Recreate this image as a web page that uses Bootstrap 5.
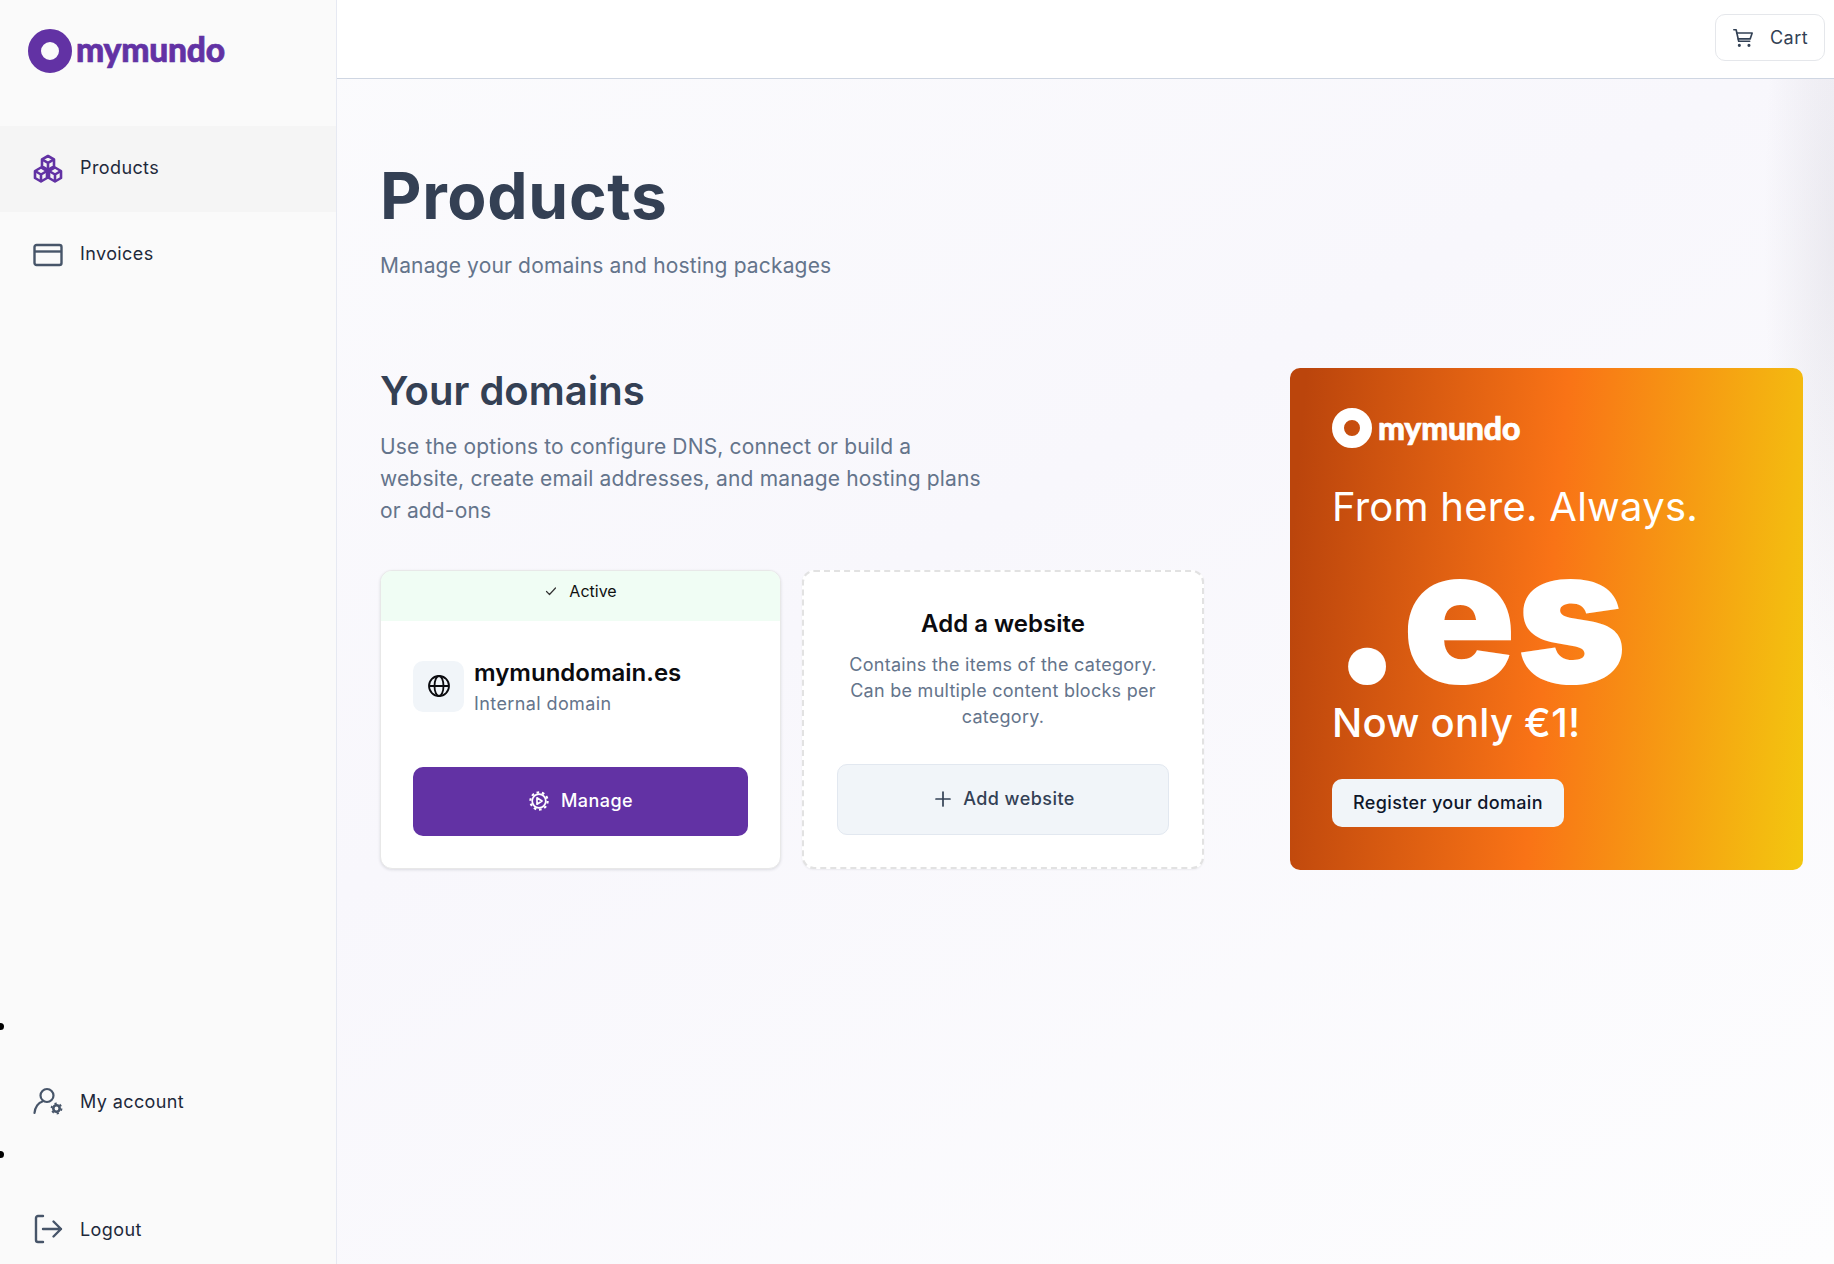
<!DOCTYPE html>
<html lang="en">
<head>
  <meta charset="UTF-8">
  <meta name="viewport" content="width=device-width, initial-scale=1.0">
  <title>mymundo - Products</title>
  <link href="https://cdn.jsdelivr.net/npm/bootstrap@5.3.0/dist/css/bootstrap.min.css" rel="stylesheet">
  <style>
    body { font-family: Inter, "Liberation Sans", sans-serif; background: #fff; height: 100vh; overflow: hidden; letter-spacing: .025em; }
    .side-panel { width: 337px; height: 100vh; background: #fafafa; border-right: 1px solid #e6e9f2; flex: none; }
    .brand-row { height: 126px; padding: 29px 0 0 28px; }
    .brand-name { font-family: Lato, sans-serif; font-weight: 900; line-height: 1; letter-spacing: -.2px; -webkit-text-stroke: .7px currentColor; }
    .brand-row .brand-name { font-size: 33.5px; color: #6232a4; margin-left: 4px; }
    .side-link { height: 86px; padding-left: 33px; gap: 17px; color: #1e293b; font-size: 18px; text-decoration: none; }
    .side-link svg { width: 30px; height: 30px; flex: none; color: #475569; }
    .side-link.is-current { background: #f5f5f5; }
    .side-link.is-current svg { color: #6232a4; }
    .top-links span { margin-bottom: 4px; }
    .foot-list { list-style: none; }
    .foot-list li { position: relative; padding: 47px 0 11px; }
    .foot-list li:last-child { padding-bottom: 0; }
    .foot-list li::before { content: ""; position: absolute; left: -3px; top: 4px; width: 7px; height: 7px; border-radius: 50%; background: #000; }
    .foot-list .side-link { height: 70px; }
    .page-area { background: radial-gradient(ellipse 70px 480px at 100% 240px, rgba(120,115,135,.11), transparent), linear-gradient(150deg, #fbfbfd 0%, #f8f7fc 42%, #fdfdfe 100%); min-width: 0; }
    .top-strip { height: 79px; background: #fff; border-bottom: 1px solid #cfd6e2; padding: 14px 9px 0 0; }
    .cart-btn { width: 110px; height: 47px; border: 1px solid #e5e7eb; border-radius: 10px; background: #fff; color: #334155; font-size: 18px; gap: 16px; letter-spacing: .025em; }
    .cart-btn svg { width: 22px; height: 22px; }
    .page-body { padding: 81px 31px 0 43px; }
    .page-title { font-size: 64px; font-weight: 700; color: #344054; line-height: 72px; margin: 0 0 18px; letter-spacing: .7px; }
    .page-sub { font-size: 21px; color: #64748b; line-height: 32px; margin: 0; letter-spacing: .16px; }
    .domain-col { width: 824px; flex: none; }
    .promo-gap { gap: 86px; margin-top: 86px; }
    .domain-title { font-size: 40px; font-weight: 600; color: #344054; line-height: 44px; margin: 1px 0 17.5px; letter-spacing: 0; }
    .domain-text { font-size: 21px; line-height: 32px; color: #64748b; max-width: 615px; margin: 0 0 43px; letter-spacing: .16px; }
    .tile-row { gap: 21px; }
    .domain-tile { width: 401px; height: 299px; background: #fff; border-radius: 12px; border: 1px solid #e8e8e8; box-shadow: 0 1px 3px rgba(15,23,42,.12); overflow: hidden; }
    .tile-status { height: 50px; background: #f0fdf4; color: #111; font-size: 16px; gap: 11px; padding-bottom: 10px; letter-spacing: 0; }
    .tile-status svg { width: 14px; height: 14px; }
    .tile-inner { padding: 35px 32px 0; }
    .globe-row { gap: 10px; }
    .globe-box { width: 51px; height: 51px; background: #f1f5f9; border-radius: 10px; flex: none; }
    .globe-box svg { width: 24px; height: 24px; }
    .tile-copy { padding-top: 2px; }
    .tile-name { font-size: 24px; font-weight: 600; color: #0b0b0f; line-height: 30px; letter-spacing: 0; }
    .tile-kind { font-size: 18px; color: #64748b; line-height: 27px; margin-top: 2px; }
    .manage-btn { height: 69px; margin-top: 50px; background: #6232a4; border: 0; border-radius: 10px; color: #fff; font-size: 18px; font-weight: 500; gap: 11px; letter-spacing: .025em; }
    .manage-btn:hover { background: #6232a4; color: #fff; }
    .manage-btn svg { width: 22px; height: 22px; }
    .manage-btn span { margin-bottom: 1px; }
    .add-tile { width: 402px; height: 299px; background: #fff; border-radius: 12px; border: 2px dashed #e2e2e2; box-shadow: 0 1px 2px rgba(15,23,42,.06); padding: 36px 32px 0; text-align: center; }
    .add-title { font-size: 24px; font-weight: 600; color: #0b0b0f; line-height: 32px; margin: 0 0 12px; letter-spacing: 0; }
    .add-text { font-size: 18px; line-height: 26.4px; color: #64748b; margin: 0 0 33px; letter-spacing: .015em; }
    .add-btn { width: 332px; height: 71px; background: #f1f5f9; border: 1px solid #e2e8f0; border-radius: 10px; color: #334155; font-size: 18px; font-weight: 500; gap: 11px; letter-spacing: .025em; padding: 0 0 0 3px; }
    .add-btn svg { width: 18px; height: 18px; }
    .add-btn span { margin-bottom: 2px; }
    .promo-box { width: 513px; height: 502px; border-radius: 10px; background: linear-gradient(95deg, #bb450c 3%, #f97316 50%, #f3c70f 100%); color: #fff; padding: 40px 42px 0; flex: none; }
    .promo-box .brand-name { font-size: 32px; margin-left: 6px; }
    .promo-line { font-size: 40px; line-height: 48px; margin: 0; letter-spacing: .25px; }
    .promo-line.first { margin-top: 35px; }
    .promo-tld { font-size: 188px; font-weight: 900; line-height: 122px; margin: 23px 0 23px; letter-spacing: 0; }
    .promo-line.second { font-weight: 500; }
    .promo-btn { width: 232px; height: 48px; background: #f1f5f9; border: 0; border-radius: 10px; color: #0f172a; font-size: 18px; font-weight: 500; margin-top: 32px; padding: 0 0 2px; letter-spacing: .02em; }
  </style>
</head>
<body class="d-flex">
  <aside class="side-panel d-flex flex-column">
    <div class="brand-row d-flex align-items-start">
      <svg width="44" height="44" viewBox="0 0 44 44"><circle cx="22" cy="22" r="15.5" fill="none" stroke="#6232a4" stroke-width="13"/></svg>
      <span class="brand-name mt-1">mymundo</span>
    </div>
    <div class="top-links">
      <a href="#" class="side-link is-current d-flex align-items-center">
        <svg viewBox="0 0 30 30" fill="none" stroke="currentColor" stroke-width="2.600" stroke-linejoin="round"><path d="M15 2l6 3.400v7l-6 3.400-6-3.400v-7z"/><path d="M9 5.400l6 3.400 6-3.400M15 8.800v7"/><path d="M8 13.500l6 3.500v7l-6 3.500-6-3.500v-7z"/><path d="M2 17l6 3.500 6-3.500M8 20.500v7"/><path d="M22 13.500l6 3.500v7l-6 3.500-6-3.500v-7z"/><path d="M16 17l6 3.500 6-3.500M22 20.500v7"/></svg>
        <span>Products</span>
      </a>
      <a href="#" class="side-link d-flex align-items-center">
        <svg viewBox="0 0 30 30" fill="none" stroke="currentColor" stroke-width="2.400" stroke-linejoin="round"><rect x="1.500" y="5" width="27" height="20" rx="2"/><path d="M1.500 11.500h27"/></svg>
        <span>Invoices</span>
      </a>
    </div>
    <ul class="foot-list mt-auto mb-0 p-0">
      <li>
        <a href="#" class="side-link d-flex align-items-center">
          <svg viewBox="0 0 30 30" fill="none" stroke="currentColor" stroke-width="2.200" stroke-linecap="round"><circle cx="14" cy="9.500" r="6.500"/><path d="M1.500 27c.5-6 4-10.500 8-11.500"/><circle cx="23.500" cy="22.500" r="3.200" stroke-width="2.600"/><circle cx="23.500" cy="22.500" r="5" stroke-width="1.800" stroke-linecap="butt" stroke-dasharray="2.200 3.040"/></svg>
          <span>My account</span>
        </a>
      </li>
      <li>
        <a href="#" class="side-link d-flex align-items-center">
          <svg viewBox="0 0 30 30" fill="none" stroke="currentColor" stroke-width="2.400" stroke-linecap="round" stroke-linejoin="round"><path d="M10 2H5c-1 0-2 1-2 2v22c0 1 1 2 2 2h5"/><path d="M10 15h18M20.500 7.500L28 15l-7.500 7.500"/></svg>
          <span>Logout</span>
        </a>
      </li>
    </ul>
  </aside>

  <div class="page-area flex-grow-1">
    <div class="top-strip d-flex justify-content-end align-items-start">
      <button class="cart-btn btn d-flex align-items-center justify-content-center p-0">
        <svg viewBox="0 0 24 24" fill="none" stroke="currentColor" stroke-width="1.800" stroke-linecap="round" stroke-linejoin="round"><path d="M2 3h2.500l2.800 12.500h12"/><path d="M5.200 6.500H22l-2.200 6.500H6.800"/><circle cx="8" cy="20" r=".8" fill="currentColor"/><circle cx="18.500" cy="20" r=".8" fill="currentColor"/></svg>
        <span>Cart</span>
      </button>
    </div>
    <main class="page-body">
      <h1 class="page-title">Products</h1>
      <p class="page-sub">Manage your domains and hosting packages</p>
      <div class="promo-gap d-flex align-items-start">
        <section class="domain-col">
          <h2 class="domain-title">Your domains</h2>
          <p class="domain-text">Use the options to configure DNS, connect or build a website, create email addresses, and manage hosting plans or add-ons</p>
          <div class="tile-row d-flex">
            <div class="domain-tile">
              <div class="tile-status d-flex align-items-center justify-content-center">
                <svg viewBox="0 0 14 14" fill="none" stroke="#333" stroke-width="1.200" stroke-linecap="round" stroke-linejoin="round"><path d="M2.500 7.500l3 3 6-6.500"/></svg>
                <span>Active</span>
              </div>
              <div class="tile-inner">
                <div class="globe-row d-flex align-items-center">
                  <div class="globe-box d-flex align-items-center justify-content-center">
                    <svg viewBox="0 0 24 24" fill="none" stroke="#0b0b0f" stroke-width="1.800"><circle cx="12" cy="12" r="10"/><path d="M2 12h20"/><ellipse cx="12" cy="12" rx="4.500" ry="10"/></svg>
                  </div>
                  <div class="tile-copy">
                    <div class="tile-name">mymundomain.es</div>
                    <div class="tile-kind">Internal domain</div>
                  </div>
                </div>
                <button class="manage-btn btn w-100 d-flex align-items-center justify-content-center">
                  <svg viewBox="0 0 22 22" fill="none" stroke="#fff" stroke-width="1.700" stroke-linejoin="round"><circle cx="11" cy="11" r="6.800"/><circle cx="11" cy="11" r="8.600" stroke-width="2.200" stroke-dasharray="2.600 2.800"/><path d="M9 7.800l5 3.200-5 3.200z"/></svg>
                  <span>Manage</span>
                </button>
              </div>
            </div>
            <div class="add-tile">
              <h3 class="add-title">Add a website</h3>
              <p class="add-text">Contains the items of the category. Can be multiple content blocks per category.</p>
              <button class="add-btn btn d-inline-flex align-items-center justify-content-center">
                <svg viewBox="0 0 18 18" fill="none" stroke="#334155" stroke-width="1.700" stroke-linecap="round"><path d="M9 2v14M2 9h14"/></svg>
                <span>Add website</span>
              </button>
            </div>
          </div>
        </section>
        <section class="promo-box">
          <div class="d-flex align-items-center">
            <svg width="40" height="40" viewBox="0 0 40 40"><circle cx="20" cy="20" r="14" fill="none" stroke="#fff" stroke-width="12"/></svg>
            <span class="brand-name">mymundo</span>
          </div>
          <p class="promo-line first">From here. Always.</p>
          <div class="promo-tld">.es</div>
          <p class="promo-line second">Now only €1!</p>
          <button class="promo-btn btn">Register your domain</button>
        </section>
      </div>
    </main>
  </div>
</body>
</html>
